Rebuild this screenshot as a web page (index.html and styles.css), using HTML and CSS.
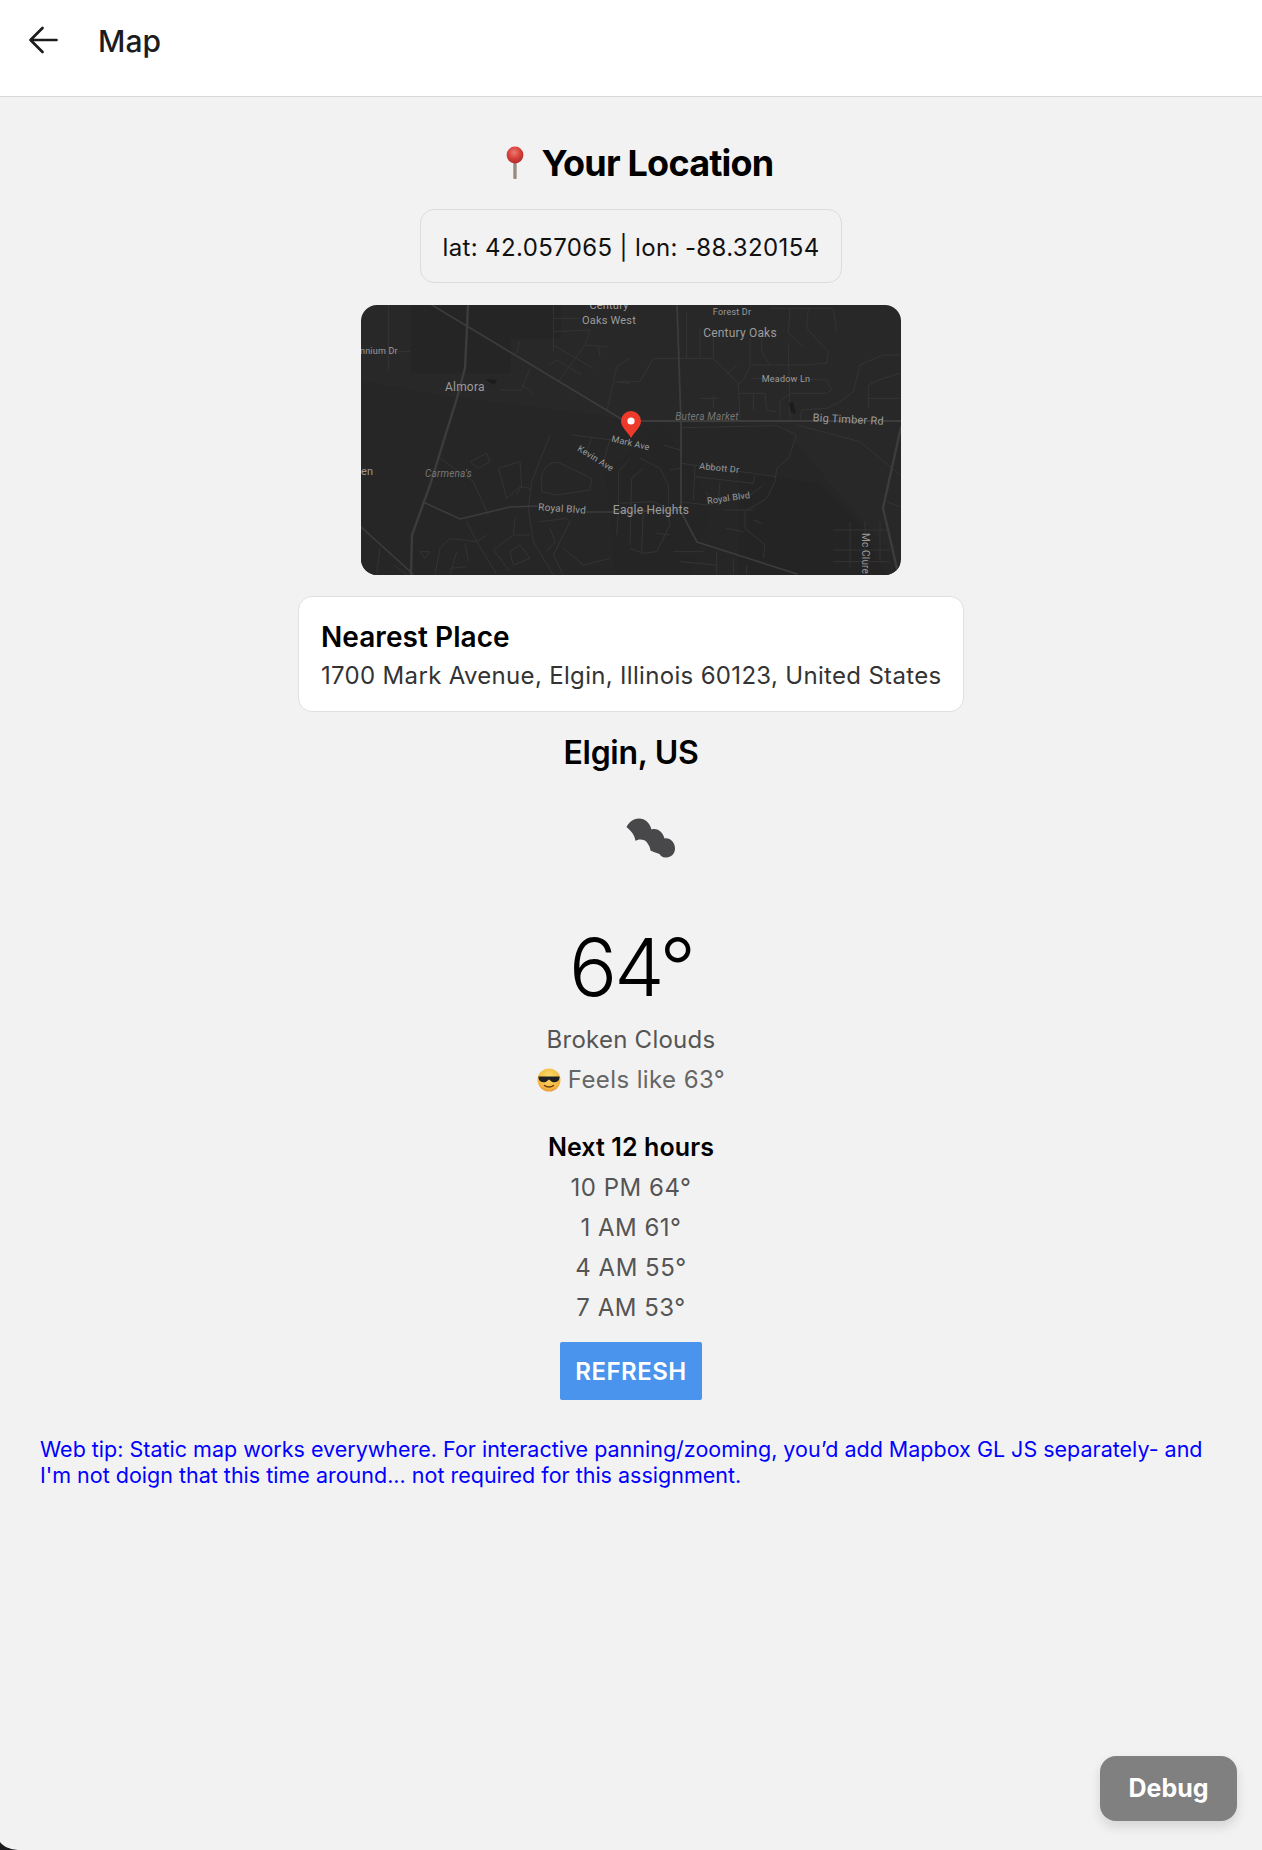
FILE: index.html
```html
<!DOCTYPE html>
<html lang="en">
<head>
<meta charset="utf-8">
<title>Map</title>
<link rel="stylesheet" href="styles.css">
</head>
<body>
<div class="app">
  <header class="topbar">
    <svg class="back" width="30" height="28" viewBox="0 0 30 28" aria-hidden="true"><path d="M28.5 14H2.5M14.5 2 2.5 14l12 12" fill="none" stroke="#1c1c1e" stroke-width="2.7" stroke-linecap="round" stroke-linejoin="round"/></svg>
    <span class="topbar-title">Map</span>
  </header>
  <main class="content">
    <h1 class="title">
      <svg class="pin-emoji" width="18" height="34" viewBox="0 0 18 34" aria-hidden="true">
        <defs>
          <radialGradient id="ball" cx="45%" cy="35%" r="65%"><stop offset="0" stop-color="#ea7a70"/><stop offset=".55" stop-color="#d8423c"/><stop offset="1" stop-color="#b22a28"/></radialGradient>
          <linearGradient id="shaft" x1="0" x2="1" y1="0" y2="0"><stop offset="0" stop-color="#a89c92"/><stop offset=".5" stop-color="#8d8077"/><stop offset="1" stop-color="#c5bdb6"/></linearGradient>
        </defs>
        <rect x="7.2" y="14" width="3.8" height="19" rx="1" fill="url(#shaft)"/>
        <circle cx="9" cy="9" r="8.4" fill="url(#ball)"/>
      </svg>
      <span>Your Location</span>
    </h1>
    <div class="coords">lat: 42.057065 | lon: -88.320154</div>
    <div class="map">
      <svg class="map-svg" width="540" height="270" viewBox="0 0 540 270" aria-hidden="true">
        <rect width="540" height="270" fill="#282828"/>
        <path d="M0 76 90 92 300 118 420 120 470 180 540 260V270H0Z" fill="#262626"/>
        <path d="M50 0H150V68H50ZM150 0H200V34H150Z" fill="#252525"/>
        <path d="M378 164 460 180 500 220 525 270H378Z" fill="#242424"/>
        <path d="M300 118 350 200 330 270H255L245 170Z" fill="#252525"/>
        <g transform="translate(-11 -10) scale(.33333)" fill="none" stroke="#343434" stroke-width="3" stroke-linejoin="round">
          <path d="M115 30V225M33 170H180"/>
          <path d="M610 30V170M610 70H690M610 110 720 105 705 150 625 260M610 150 730 220M595 210 620 195 695 240M705 150 770 155M745 155 750 185M540 220 515 285H450M515 270 550 295M510 140 500 175M840 190 800 215 790 260 840 265M790 265 770 350"/>
          <path d="M600 420 545 560 535 640 550 740 610 840M665 420 790 435M725 430 705 480M780 435 760 500M805 530V650L800 720M840 490 805 530"/>
          <path d="M360 500 410 475 420 500 385 520ZM270 490 370 560 415 660M445 520 510 500 515 570 500 600M445 520 470 610 510 575 540 580"/>
          <path d="M575 540C585 510 610 495 630 505L725 550 720 585 620 600 575 590Z"/>
          <path d="M570 680 650 670 660 680 610 780 640 840M600 700 615 740 590 770M495 670 490 720 430 765 480 830M490 720H540M480 770 510 750 540 790 490 810Z"/>
          <path d="M350 680 380 740 440 838M410 720 380 740 300 730 270 760 255 838M210 770H240L225 790ZM320 770 300 838M300 820 350 815M345 745 355 800M90 760 80 838M130 810 170 838M640 760 700 810 780 790"/>
        </g>
        <g transform="translate(259 -10) scale(.33333)" fill="none" stroke="#343434" stroke-width="3" stroke-linejoin="round">
          <path d="M200 50V190M240 100V190M280 110V190M100 190H280L355 265 360 370M100 190 60 260H0M350 210 320 240"/>
          <path d="M390 130V210H550L620 205 625 170 560 100 565 40M450 40H640L650 110M510 40 505 115 550 155M425 130V170L450 210M505 150 510 370M390 215 370 255 350 270M395 250 620 255 635 285 620 295H510L480 320V370M360 295H435L440 345 470 350M400 295V345M240 310H295M280 300V340"/>
          <path d="M840 180H790L720 210 700 290 660 320 620 340 545 345 540 375M840 235 790 250 745 270V340M745 310H840"/>
          <path d="M185 398 470 392 530 420 505 490 470 520 465 560 440 610 375 650V700L435 750 430 790M530 390 720 440 840 540"/>
          <path d="M185 505 400 535 470 545M225 545 400 565 405 540M225 510 220 615M300 560 295 620M255 590 265 600M180 620 260 630 390 600 430 570M310 645H400M320 700 370 710M400 675 425 685"/>
          <path d="M0 625 100 620 140 640 150 690 110 770 70 775 30 760M60 490 120 520 145 570V640M70 520 35 550 30 750M150 525 180 520M130 450 180 465M70 640 65 770M110 715 150 720"/>
          <path d="M290 770V838M340 790V838M380 810V838M160 770H250M180 800 290 810"/>
          <path d="M640 705H810M640 765H810M640 800H810M690 680V820M735 680V830M780 680V800M800 620 840 635"/>
        </g>
        <g fill="none" stroke="#3c3c3c" stroke-linecap="round">
          <path stroke-width="2.4" d="M107 0 106 23 104 63 96 93 69 180 51 230 50 269"/>
          <path stroke-width="1.6" d="M71 0 262 115M0 222 52 269"/>
          <path stroke-width="1.6" d="M62 197 99 214 149 202 176 201M226 207 256 207 319 205M319 205 336 237 436 269"/>
          <path stroke-width="1.8" d="M280 116 540 116M316 0 320 117 320 205"/>
          <path stroke-width="2.4" d="M540 122 522 203 537 268"/>
        </g>
        <path d="M124 74l12 1-3 5zM428 98l4-1 3 12-5-2z" fill="#1c1c1c"/>
        <g class="lbl">
          <text x="-1" y="49" class="s8">nnium Dr</text>
          <text x="84" y="86" class="s11">Almora</text>
          <text x="0" y="170" class="s10">en</text>
          <text x="64" y="172" class="s9 it">Carmena's</text>
          <text x="248" y="4" class="s10 mid">Century</text>
          <text x="248" y="19" class="s10 mid">Oaks West</text>
          <text x="371" y="10" class="s8 mid">Forest Dr</text>
          <text x="379" y="32" class="s11 mid">Century Oaks</text>
          <text x="425" y="77" class="s8 mid">Meadow Ln</text>
          <text x="346" y="115" class="s9 it mid">Butera Market</text>
          <text x="487" y="118" class="s10 mid" transform="rotate(3 487 118)">Big Timber Rd</text>
          <text x="269" y="141" class="s8 mid" transform="rotate(13 269 141)">Mark Ave</text>
          <text x="233" y="156" class="s8 mid" transform="rotate(32 233 156)">Kevin Ave</text>
          <text x="358" y="166" class="s8 mid" transform="rotate(6 358 166)">Abbott Dr</text>
          <text x="368" y="196" class="s8 mid" transform="rotate(-8 368 196)">Royal Blvd</text>
          <text x="201" y="207" class="s9 mid" transform="rotate(4 201 207)">Royal Blvd</text>
          <text x="290" y="209" class="s11 mid">Eagle Heights</text>
          <text x="501" y="228" class="s9" transform="rotate(90 501 228)">Mc Clure</text>
        </g>
        <path d="M270 133C266 126 260 122 260 116A10 10 0 0 1 280 116C280 122 274 126 270 133Z" fill="#ee3a2b"/>
        <circle cx="270" cy="116" r="3.6" fill="#fff"/>
      </svg>
    </div>
    <section class="place">
      <div class="place-name">Nearest Place</div>
      <div class="place-addr">1700 Mark Avenue, Elgin, Illinois 60123, United States</div>
    </section>
    <h2 class="city">Elgin, US</h2>
    <svg class="cloud" width="90" height="80" viewBox="-4 0 90 80" aria-hidden="true">
      <path d="M36.5 27C39 22 43 19 49 18.5C55 18.5 60 23 61.5 29.5C66 28 72 30 74.5 38.5C80 37.5 85 42.5 85 48.5C85 54 80.5 58 75.5 57.5C72 57.5 70.5 55.5 69.5 54C66 53 61 51 60.5 50.5C60 46 57 42 55 40.5C51 39 48 39 45.5 41C44.5 34 40 30 36.5 27Z" fill="#48484a"/>
    </svg>
    <div class="temp">64°</div>
    <div class="cond">Broken Clouds</div>
    <div class="feels">
      <svg class="shades" width="24" height="24" viewBox="0 0 24 24" aria-hidden="true">
        <defs><radialGradient id="face" cx="50%" cy="35%" r="70%"><stop offset="0" stop-color="#fbdc6a"/><stop offset=".7" stop-color="#f5b942"/><stop offset="1" stop-color="#e8943a"/></radialGradient></defs>
        <circle cx="12" cy="12" r="11.5" fill="url(#face)"/>
        <path d="M1.5 8.5H22.5V10C22 14 18 15 15.5 14 14 13.5 13 12 12 11.5 11 12 10 13.5 8.5 14 6 15 2 14 1.5 10Z" fill="#1f2024"/>
        <path d="M7.5 17.5C10 19.5 14 19.5 16.5 17.5" fill="none" stroke="#6b3d12" stroke-width="1.5" stroke-linecap="round"/>
      </svg>
      <span>Feels like 63°</span>
    </div>
    <h3 class="next">Next 12 hours</h3>
    <ul class="hours">
      <li>10 PM 64°</li>
      <li>1 AM 61°</li>
      <li>4 AM 55°</li>
      <li>7 AM 53°</li>
    </ul>
    <button class="refresh" type="button">REFRESH</button>
    <p class="tip">Web tip: Static map works everywhere. For interactive panning/zooming, you’d add Mapbox GL JS separately- and I'm not doign that this time around... not required for this assignment.</p>
  </main>
  <button class="debug" type="button">Debug</button>
  <svg class="corner" width="18" height="8" viewBox="0 0 18 8" aria-hidden="true"><path d="M0 0C3 4 8 7 18 8H0Z" fill="#1c1c1e"/></svg>
</div>
</body>
</html>
```
FILE: styles.css
```css
* { box-sizing: border-box; }
html, body { margin: 0; padding: 0; }
body { font-family: Inter, "Liberation Sans", sans-serif; background: #f2f2f2; color: #000; }
.app { position: relative; width: 100%; height: 1850px; overflow: hidden; background: #f2f2f2; }
.topbar { height: 97px; background: #fff; border-bottom: 1px solid #d8d8d8; display: flex; align-items: center; padding: 0 0 0 28px; }
.back { flex: none; margin-right: 40px; margin-top: -16px; }
.topbar-title { font-size: 30px; font-weight: 500; color: #1c1c1e; margin-top: -14px; }
.content { display: flex; flex-direction: column; align-items: center; }
.title { display: flex; align-items: center; gap: 18px; margin: 43px 0 0; padding-left: 17px; height: 46px; font-size: 36px; line-height: 46px; font-weight: 700; letter-spacing: -0.8px; }
.coords { margin-top: 23px; width: 422px; height: 74px; padding-top: 3px; border: 1px solid #dcdcdc; border-radius: 14px; display: flex; align-items: center; justify-content: center; font-size: 24px; letter-spacing: .37px; color: #111; }
.map { margin-top: 22px; width: 540px; height: 270px; border-radius: 16px; overflow: hidden; }
.map-svg { display: block; }
.lbl text { fill: #9c9c9c; font-family: Roboto, "Liberation Sans", sans-serif; letter-spacing: .2px; }
.s8 { font-size: 9px; }
.s9 { font-size: 10px; }
.s10 { font-size: 11px; }
.s11 { font-size: 12px; }
.lbl .it { font-style: italic; fill: #777; }
.mid { text-anchor: middle; }
.place { margin-top: 21px; width: 666px; height: 116px; padding: 21px 22px 0; background: #fff; border: 1px solid #e0e0e0; border-radius: 14px; }
.place-name { font-size: 28px; line-height: 38px; font-weight: 600; letter-spacing: .06px; }
.place-addr { font-size: 24px; line-height: 38px; letter-spacing: .32px; color: #333; margin-top: 1px; white-space: nowrap; }
.city { margin: 19px 0 0; font-size: 32px; line-height: 44px; font-weight: 600; letter-spacing: -.3px; }
.cloud { display: block; margin-top: 25px; }
.temp { margin-top: 41px; font-size: 80px; line-height: 92px; font-weight: 300; letter-spacing: -3px; }
.cond { margin-top: 7px; font-size: 24px; line-height: 40px; letter-spacing: .25px; color: #555; }
.feels { display: flex; align-items: center; gap: 7px; font-size: 24px; line-height: 40px; letter-spacing: .4px; color: #666; }
.next { margin: 27px 0 0; font-size: 25px; line-height: 40px; font-weight: 600; letter-spacing: .1px; }
.hours { list-style: none; margin: 1px 0 0; padding: 0; text-align: center; font-size: 24px; line-height: 40px; letter-spacing: .5px; color: #555; }
.refresh { margin-top: 14px; width: 142px; height: 58px; border: 0; border-radius: 2px; background: #4a94ee; color: #fff; font: 600 24px/58px Inter, "Liberation Sans", sans-serif; padding: 1px 0 0; letter-spacing: .5px; }
.tip { align-self: stretch; margin: 36px 40px 0; font-size: 21.5px; line-height: 26px; color: #0000ff; }
.debug { position: absolute; left: 1100px; top: 1756px; width: 137px; height: 65px; border: 0; border-radius: 16px; background: #808080; color: #fff; font: 700 25px/65px Inter, "Liberation Sans", sans-serif; padding: 0; box-shadow: 0 6px 12px rgba(0,0,0,.12); }
.corner { position: absolute; left: 0; bottom: 0; display: block; }
```
